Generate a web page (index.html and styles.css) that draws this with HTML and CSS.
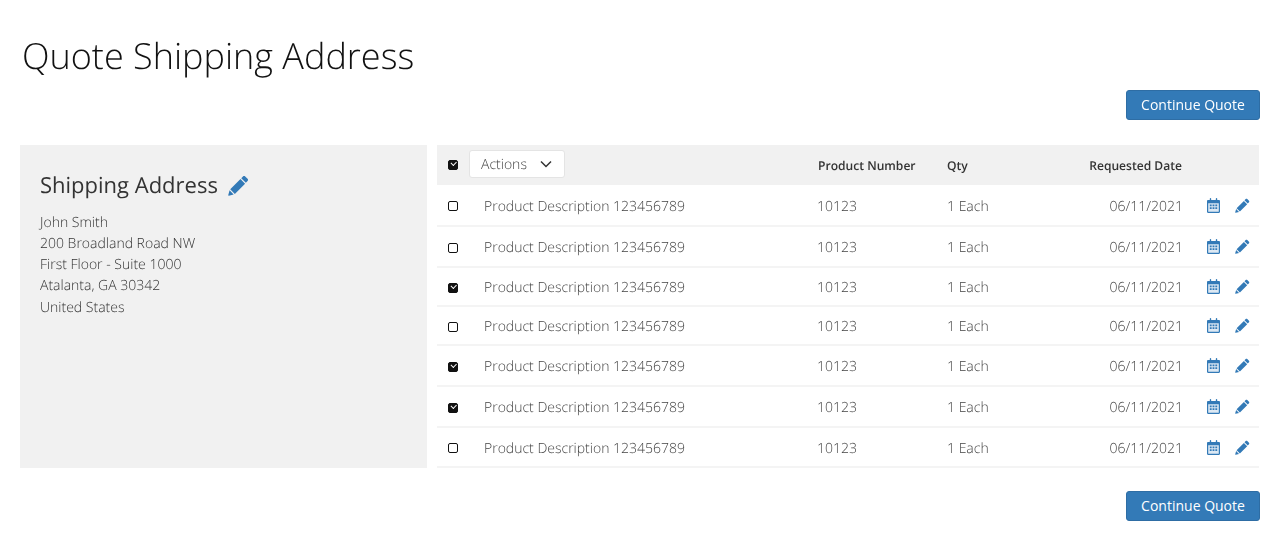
FILE: index.html
```html
<!DOCTYPE html>
<html lang="en">
<head>
<meta charset="utf-8">
<title>Quote Shipping Address</title>
<link rel="stylesheet" href="styles.css">
</head>
<body>
<svg class="defs" width="0" height="0" aria-hidden="true">
  <symbol id="pencil" viewBox="0 0 16 16">
    <path d="M11.400 1.100c.5-.5 1.200-.5 1.700 0l1.800 1.800c.5.5.5 1.200 0 1.700l-1.300 1.300-3.500-3.500z"/>
    <path d="M9.500 3.100 13 6.600 5.200 14.400 1.700 10.900zM1.200 11.700l3.100 3.100-3.600 1c-.3.1-.6-.2-.5-.5z"/>
  </symbol>
  <symbol id="cal" viewBox="0 0 14 16">
    <path class="cal-fill" d="M1 5h12v10H1z"/>
    <path fill-rule="evenodd" d="M1.200 2H3V.8C3 .4 3.300 0 3.800 0s.7.4.7.8V2h5V.8c0-.4.3-.8.8-.8s.7.4.7.8V2h1.800c.7 0 1.200.5 1.200 1.200v11.600c0 .7-.5 1.200-1.200 1.200H1.200C.5 16 0 15.500 0 14.800V3.200C0 2.500.5 2 1.200 2zM1.300 5.500v9.200h11.400V5.500z"/>
    <path d="M3 7h2v1.800H3zM6 7h2v1.800H6zM9 7h2v1.800H9zM3 10h2v1.800H3zM6 10h2v1.800H6zM9 10h2v1.800H9z"/>
  </symbol>
  <symbol id="chev" viewBox="0 0 12 8">
    <path d="M1 1.500l5 5 5-5" fill="none" stroke="currentColor" stroke-width="1.500"/>
  </symbol>
</svg>

<h1 class="title">Quote Shipping Address</h1>
<div class="actions-bar"><button class="btn" type="button">Continue Quote</button></div>

<main class="content">
  <section class="address">
    <h2 class="address-title">Shipping Address <svg class="icon pencil-lg"><use href="#pencil"/></svg></h2>
    <p class="address-lines">John Smith<br>200 Broadland Road NW<br>First Floor - Suite 1000<br>Atalanta, GA 30342<br>United States</p>
  </section>

  <section class="items">
    <div class="row head">
      <span class="box on"></span>
      <span class="cell-desc"><span class="dropdown">Actions <svg class="chev"><use href="#chev"/></svg></span></span>
      <span class="num">Product Number</span>
      <span class="qty">Qty</span>
      <span class="date">Requested Date</span>
      <span></span>
    </div>
    <div class="row r42"><span class="box"></span><span class="cell-desc">Product Description 123456789</span><span class="num">10123</span><span class="qty">1 Each</span><span class="date">06/11/2021</span><span class="ops"><svg class="icon cal"><use href="#cal"/></svg><svg class="icon pencil"><use href="#pencil"/></svg></span></div>
    <div class="row r41"><span class="box"></span><span class="cell-desc">Product Description 123456789</span><span class="num">10123</span><span class="qty">1 Each</span><span class="date">06/11/2021</span><span class="ops"><svg class="icon cal"><use href="#cal"/></svg><svg class="icon pencil"><use href="#pencil"/></svg></span></div>
    <div class="row r39"><span class="box on"></span><span class="cell-desc">Product Description 123456789</span><span class="num">10123</span><span class="qty">1 Each</span><span class="date">06/11/2021</span><span class="ops"><svg class="icon cal"><use href="#cal"/></svg><svg class="icon pencil"><use href="#pencil"/></svg></span></div>
    <div class="row r39"><span class="box"></span><span class="cell-desc">Product Description 123456789</span><span class="num">10123</span><span class="qty">1 Each</span><span class="date">06/11/2021</span><span class="ops"><svg class="icon cal"><use href="#cal"/></svg><svg class="icon pencil"><use href="#pencil"/></svg></span></div>
    <div class="row r41"><span class="box on"></span><span class="cell-desc">Product Description 123456789</span><span class="num">10123</span><span class="qty">1 Each</span><span class="date">06/11/2021</span><span class="ops"><svg class="icon cal"><use href="#cal"/></svg><svg class="icon pencil"><use href="#pencil"/></svg></span></div>
    <div class="row r41"><span class="box on"></span><span class="cell-desc">Product Description 123456789</span><span class="num">10123</span><span class="qty">1 Each</span><span class="date">06/11/2021</span><span class="ops"><svg class="icon cal"><use href="#cal"/></svg><svg class="icon pencil"><use href="#pencil"/></svg></span></div>
    <div class="row r40"><span class="box"></span><span class="cell-desc">Product Description 123456789</span><span class="num">10123</span><span class="qty">1 Each</span><span class="date">06/11/2021</span><span class="ops"><svg class="icon cal"><use href="#cal"/></svg><svg class="icon pencil"><use href="#pencil"/></svg></span></div>
  </section>
</main>

<div class="actions-bar bottom"><button class="btn" type="button">Continue Quote</button></div>
</body>
</html>
```
FILE: styles.css
```css
* { box-sizing: border-box; }
html, body { margin: 0; padding: 0; }
body {
  background: #fff;
  color: #333;
  font-family: "Open Sans", sans-serif;
  font-weight: 300;
  font-size: 14px;
  padding: 0 20px;
  height: 546px;
  overflow: hidden;
  text-rendering: geometricPrecision;
  will-change: opacity;
}
.defs { position: absolute; }
.title {
  margin: 0;
  padding: 31px 0 0 2px;
  font-size: 36px;
  line-height: 50px;
  font-weight: 300;
  color: #111;
}
.actions-bar { display: flex; justify-content: flex-end; margin-top: 9px; }
.actions-bar.bottom { margin-top: 23px; }
.btn {
  width: 134px;
  height: 30px;
  border: 1px solid #2e6da4;
  border-radius: 3px;
  background: #337ab7;
  color: #fff;
  font: 400 14px/1 "Open Sans", sans-serif;
  padding: 0;
}
.content { display: flex; gap: 10px; margin-top: 25px; height: 323px; }
.address { width: 407px; background: #f1f1f1; padding: 25px 20px; }
.address-title {
  margin: 0;
  font-size: 22px;
  line-height: 30px;
  font-weight: 400;
  color: #333;
  display: flex;
  align-items: center;
  gap: 10px;
}
.address-lines { margin: 11.500px 0 0; line-height: 21.300px; font-size: 14px; color: #333; }
.items { width: 822px; }
.row {
  display: grid;
  grid-template-columns: 47px 333px 130px 120px 116px 1fr;
  align-items: center;
  border-bottom: 2px solid #f4f4f4;
  padding-top: 2px;
  color: #444;
  font-size: 14px;
}
.r42 { height: 42px; }
.r41 { height: 41px; }
.r40 { height: 40px; }
.r39 { height: 39px; }
.head { height: 40px; padding-top: 0; background: #f1f1f1; border: 0; font-size: 12.100px; font-weight: 600; color: #333; }
.box {
  justify-self: start;
  margin-left: 11px;
  width: 10px;
  height: 10px;
  border: 1.500px solid #111;
  border-radius: 2px;
  background: #fff;
  position: relative;
}
.box.on { background: #111; }
.box.on::after {
  content: "";
  position: absolute;
  left: 1.500px;
  top: 0;
  width: 4px;
  height: 2.500px;
  border-left: 1.500px solid #fff;
  border-bottom: 1.500px solid #fff;
  transform: rotate(-45deg);
}
.head .cell-desc { margin-left: -15px; }
.dropdown {
  display: inline-flex;
  align-items: center;
  gap: 13px;
  height: 28px;
  width: 96px;
  padding: 2px 0 0 11px;
  margin-bottom: 3px;
  background: #fff;
  border: 1px solid #e4e4e4;
  border-radius: 3px;
  font-size: 14px;
  font-weight: 300;
  color: #444;
}
.chev { width: 12px; height: 8px; margin-top: -2px; color: #333; }
.head .num { padding-left: 1px; }
.date { text-align: right; }
.head .date { padding-right: 1px; }
.ops { display: flex; align-items: center; gap: 15px; padding: 0 0 2px 24px; }
.icon { fill: #337ab7; display: block; }
.cal-fill { fill: #dce8f3; }
.cal { width: 13px; height: 15px; }
.pencil { width: 15px; height: 15px; }
.pencil-lg { width: 21px; height: 21px; }
```
